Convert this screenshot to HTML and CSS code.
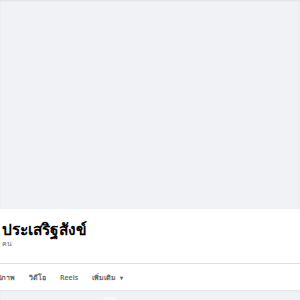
FILE: index.html
```html
<!DOCTYPE html>
<html lang="th">
<head>
<meta charset="utf-8">
<title>Profile</title>
<link rel="stylesheet" href="styles.css">
</head>
<body>
<div class="page">
  <div class="cover"></div>
  <section class="profile">
    <div class="info">
      <h1 class="name">ประเสริฐสังข์</h1>
      <div class="friends">คน</div>
    </div>
    <nav class="tabs">
      <span class="tab tab-first">รูปภาพ</span>
      <span class="tab">วิดีโอ</span>
      <span class="tab">Reels</span>
      <span class="tab">เพิ่มเติม <span class="caret">▾</span></span>
    </nav>
  </section>
  <div class="below">
    <div class="stub"></div>
  </div>
</div>
</body>
</html>
```
FILE: styles.css
```css
html, body {
  margin: 0;
  padding: 0;
  background: #f0f2f5;
  font-family: "Noto Sans", "Liberation Sans", sans-serif;
}
.page {
  width: 300px;
  height: 300px;
  overflow: hidden;
}
.cover {
  height: 209px;
  background: #f0f2f5;
  box-shadow: inset 0 1px 2px rgba(0, 0, 0, 0.07);
}
.profile {
  background: #fff;
}
.info {
  padding: 9px 0 0 2px;
  height: 45px;
  border-bottom: 1px solid #dcdfe3;
}
.name {
  margin: 0;
  font-size: 15.5px;
  line-height: 22px;
  font-weight: 700;
  color: #050505;
}
.friends {
  font-size: 7px;
  line-height: 8px;
  color: #65676b;
}
.tabs {
  display: flex;
  align-items: center;
  height: 26px;
  gap: 14px;
  font-size: 7px;
  font-weight: 600;
  color: #65676b;
  white-space: nowrap;
}
.tab-first {
  margin-left: -7px;
}
.caret {
  font-size: 6px;
  margin-left: 2px;
}
.below {
  height: 10px;
  background: #f0f2f5;
  box-shadow: inset 0 1px 2px rgba(0, 0, 0, 0.06);
  display: flex;
  padding-left: 103px;
  align-items: flex-end;
}
.stub {
  width: 13px;
  height: 3px;
  background: #f7f8fa;
  border-radius: 3px 3px 0 0;
}
```
